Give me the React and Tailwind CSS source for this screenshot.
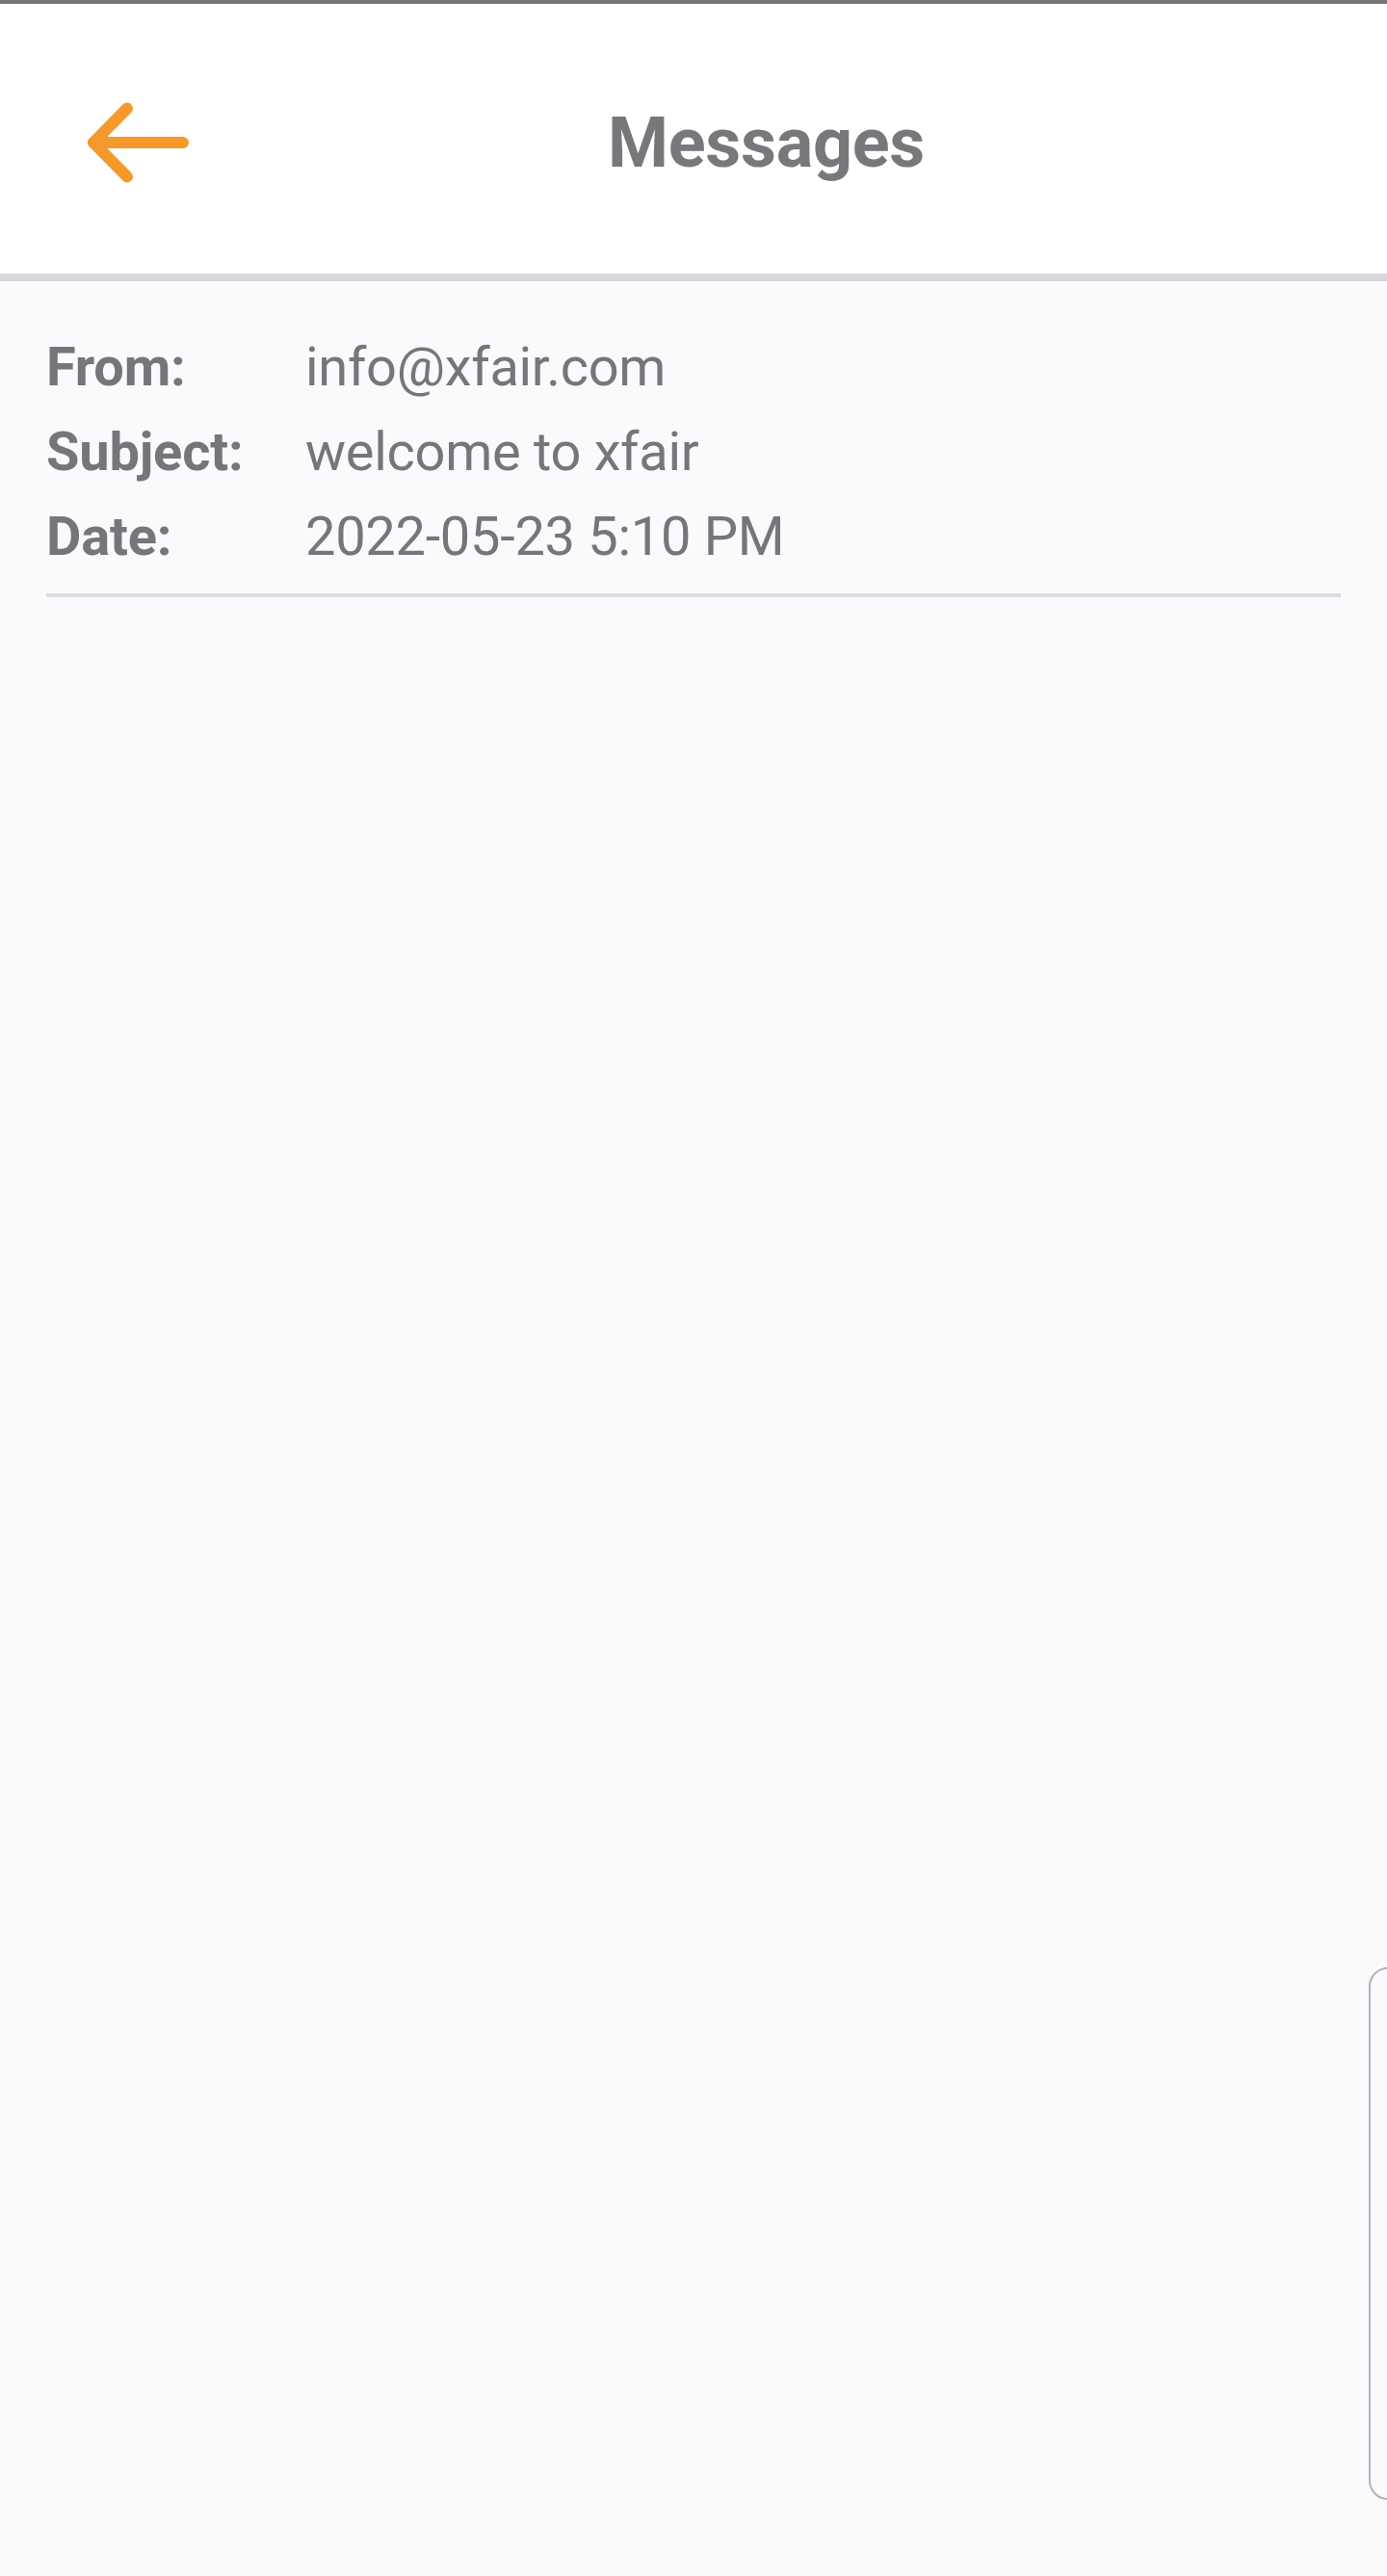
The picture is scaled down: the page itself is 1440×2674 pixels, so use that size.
import React from "react";

function BackArrow() {
  return (
    <svg width="132" height="100" viewBox="0 0 132 100" className="block">
      <g fill="none" stroke="#f6992c" strokeWidth="12" strokeLinecap="round" strokeLinejoin="round">
        <line x1="27" y1="50" x2="120" y2="50" />
        <polyline points="62,14.5 27,50 62,85.5" />
      </g>
    </svg>
  );
}

function Row({ label, value }) {
  return (
    <div className="flex h-[88px] items-center leading-[88px]">
      <div className="w-[269px] shrink-0 font-bold tracking-[-0.2px]">{label}</div>
      <div className="tracking-[-0.3px]">{value}</div>
    </div>
  );
}

export default function App() {
  return (
    <div
      className="relative min-h-[2674px] overflow-hidden bg-[#faf9fc] text-[#767579]"
      style={{ fontFamily: "Roboto, 'Noto Sans', sans-serif" }}
    >
      <div className="h-[4px] bg-[#77767b]" />
      <header className="flex h-[288px] items-center border-b-[8px] border-[#d8d7db] bg-white">
        <div className="ml-[70px] mt-[7px] flex h-[100px] w-[132px] items-center">
          <BackArrow />
        </div>
        <h1 className="ml-[429px] mt-[9px] text-[72px] font-bold leading-none tracking-[-0.3px] text-[#78777c]">
          Messages
        </h1>
      </header>
      <main className="px-[48px] pt-[45px]">
        <div className="pb-[15px] text-[56px]">
          <Row label="From:" value="info@xfair.com" />
          <Row label="Subject:" value="welcome to xfair" />
          <Row label="Date:" value="2022-05-23 5:10 PM" />
        </div>
        <div className="h-[4px] bg-[#dcdbdf]" />
      </main>
      <div className="absolute left-[1421px] top-[2042px] h-[553px] w-[60px] rounded-[20px] border-[2px] border-[#b3b2b6]" />
    </div>
  );
}
